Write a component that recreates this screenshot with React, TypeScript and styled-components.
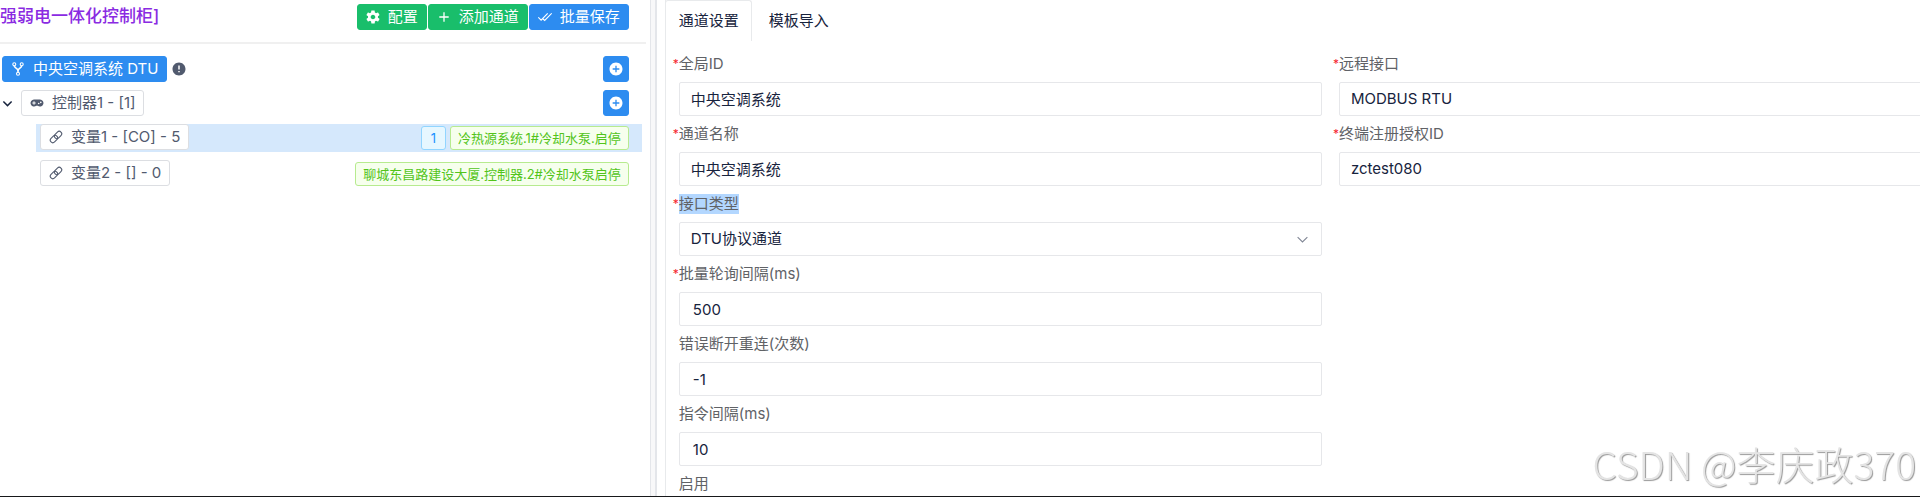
import React from 'react';
import styled, { createGlobalStyle, css } from 'styled-components';
import { IoMdSettings, IoMdAddCircle, IoMdAlert } from 'react-icons/io';

const sans = `Inter, "Noto Sans CJK SC", sans-serif`;

const Global = createGlobalStyle`
  *, *::before, *::after { box-sizing: border-box; }
  body { margin: 0; background: #fff; color: #17233d; font: 15px/20px ${sans}; }
  button, input, select { font: inherit; }
`;

const Shell = styled.div`
  display: flex;
  height: 100vh;
  overflow: hidden;
  border-bottom: 1px solid #17181a;
`;

const Sidebar = styled.aside`
  flex: 0 0 34%;
  min-width: 640px;
  padding-right: 7px;
`;

const Header = styled.header`
  display: flex;
  justify-content: space-between;
  padding: 4px 17px 12px 0;
  border-bottom: 2px solid #f0f0f0;
`;

const Title = styled.h1`
  margin: 0;
  font-size: 17px;
  line-height: 24px;
  font-weight: 500;
  color: #8a2be2;
`;

const Actions = styled.div`
  display: flex;
  gap: 1px;
`;

type Tone = 'primary' | 'success' | 'plain';

const tones = {
  primary: css`background: #2d8cf0; border-color: #2d8cf0; color: #fff;`,
  success: css`background: #19be6b; border-color: #19be6b; color: #fff;`,
  plain: css`background: #fff; border-color: #dcdee2; color: #515a6e;`,
};

const Button = styled.button<{ $tone: Tone; $square?: boolean }>`
  display: inline-flex;
  align-items: center;
  justify-content: center;
  gap: 8px;
  height: 26px;
  padding: 0 8px;
  border: 1px solid;
  border-radius: 3px;
  white-space: nowrap;
  cursor: pointer;
  ${p => tones[p.$tone]}
  ${p => p.$square && css`width: 26px; padding: 0;`}
  svg { flex: none; width: 14px; height: 14px; }
`;

const Tree = styled.ul`
  display: flex;
  flex-direction: column;
  gap: 8px;
  margin: 0;
  padding: 12px 4px 0 0;
  list-style: none;
`;

const Row = styled.li<{ $leaf?: boolean; $selected?: boolean }>`
  display: flex;
  align-items: center;
  gap: 4px;
  min-height: 26px;
  margin-left: ${p => (p.$leaf ? 36 : 0)}px;
  padding: 0 13px 0 ${p => (p.$leaf ? 4 : 2)}px;
  background: ${p => (p.$selected ? '#d5e8fc' : 'transparent')};
  ${p => p.$leaf && css`min-height: 28px; align-items: flex-start;`}
`;

const Alert = styled(IoMdAlert)`
  width: 14px;
  height: 14px;
  margin-left: 1px;
  color: #515a6e;
`;

const Toggle = styled.button`
  display: flex;
  width: 15px;
  padding: 0;
  border: 0;
  background: none;
  color: #17233d;
`;

const Spacer = styled.span`
  flex: 1;
`;

const Tag = styled.span<{ $blue?: boolean }>`
  min-width: 25px;
  height: 24px;
  margin-top: 2px;
  padding: 0 7px;
  border: 1px solid ${p => (p.$blue ? '#91d5ff' : '#b7eb8f')};
  border-radius: 3px;
  background: ${p => (p.$blue ? '#e6f7ff' : '#f6ffed')};
  color: ${p => (p.$blue ? '#1890ff' : '#52c41a')};
  font-size: 13px;
  line-height: 22px;
  text-align: center;
  white-space: nowrap;
`;

const Splitter = styled.div`
  flex: 0 0 7px;
  margin-left: -3px;
  border: solid #e4e6ea;
  border-width: 0 2px 0 1px;
  background: #f8f8f9;
`;

const Main = styled.main`
  flex: 1;
  min-width: 0;
  margin-left: 8px;
  border-left: 1px solid #e8eaec;
`;

const Tabs = styled.nav`
  display: flex;
  height: 41px;
  margin-left: -1px;
`;

const Tab = styled.button<{ $active?: boolean }>`
  padding: 0 12px 0 13px;
  border: 1px solid ${p => (p.$active ? '#e8eaec' : 'transparent')};
  border-bottom: 0;
  border-radius: 3px 3px 0 0;
  background: none;
  color: #17233d;
  & + & { margin-left: 3px; }
`;

const Form = styled.form`
  display: grid;
  grid-template-columns: 1fr 1fr;
  column-gap: 17px;
  align-items: start;
  margin: 5px -62px 0 0;
  padding-left: 13px;
`;

const Column = styled.div`
  display: flex;
  flex-direction: column;
`;

const Label = styled.label`
  display: flex;
  align-items: center;
  height: 36px;
  color: #606266;
`;

const Star = styled.span`
  width: 6px;
  margin-left: -6px;
  color: #f5222d;
  font-size: 12px;
`;

const Marked = styled.mark`
  background: #b3d7ff;
  color: inherit;
`;

const control = css`
  width: 100%;
  height: 34px;
  border: 1px solid #e6e7ea;
  border-radius: 2px;
  background: #fff;
  color: #17233d;
  outline: 0;
`;

const Input = styled.input<{ $numeric?: boolean }>`
  ${control}
  padding: ${p => (p.$numeric ? '0 13px' : '0 11px 2px')};
`;

const SelectBox = styled.div`
  display: grid;
  align-items: center;
  & > * { grid-area: 1 / 1; }
  svg { justify-self: end; margin-right: 13px; pointer-events: none; }
`;

const Select = styled.select`
  ${control}
  appearance: none;
  padding: 0 11px;
`;

const Watermark = styled.div`
  position: fixed;
  right: 4px;
  bottom: 6px;
  color: #e4e4e4;
  font: 300 39px/56px "Noto Sans CJK SC", sans-serif;
  text-shadow: 1px 1px 1px #999;
  pointer-events: none;
`;

const Chevron = ({ size, color, stroke = 1 }: { size: number; color: string; stroke?: number }) => (
  <svg width={size} height={size} viewBox="0 0 12 12" fill="none" stroke={color} strokeWidth={stroke} aria-hidden>
    <path d="M1.5 3.8 6 8.3l4.5-4.5" />
  </svg>
);

const Plus = () => (
  <svg viewBox="0 0 14 14" fill="none" stroke="currentColor" strokeWidth="1.3" aria-hidden>
    <path d="M7 2.300v9.400M2.300 7h9.400" />
  </svg>
);

const DoubleCheck = () => (
  <svg viewBox="0 0 14 14" fill="none" stroke="currentColor" strokeWidth="1.2" aria-hidden>
    <path d="M.3 7.300 3.100 10.200 9.700 3.300M4.500 8.500 6.700 10.500 13.700 3.300" />
  </svg>
);

const Fork = () => (
  <svg viewBox="0 0 14 14" fill="none" stroke="currentColor" strokeWidth="1.1" aria-hidden>
    <circle cx="3.300" cy="2.300" r="1.500" />
    <circle cx="10.700" cy="2.300" r="1.500" />
    <circle cx="7" cy="11.800" r="1.500" />
    <path d="M3.300 3.800c0 2.600 3.700 2.200 3.700 5.200v1.300M10.700 3.800c0 2.600-3.700 2.200-3.700 5.200" strokeWidth="1.600" />
  </svg>
);

const Gamepad = () => (
  <svg viewBox="0 0 14 14" aria-hidden>
    <path
      d="M4 3.500h6a3.500 3.500 0 1 1-2.300 6.200H6.300A3.500 3.500 0 1 1 4 3.500z"
      fill="currentColor"
    />
    <path d="M4 5.300v3.400M2.300 7h3.400" stroke="#fff" strokeWidth="1" />
    <circle cx="8.700" cy="7.500" r=".8" fill="#fff" />
    <circle cx="10.800" cy="6.400" r=".8" fill="#fff" />
  </svg>
);

const Chain = () => (
  <svg viewBox="0 0 14 14" fill="none" stroke="currentColor" strokeWidth="1.1" aria-hidden>
    <g transform="rotate(-45 7 7)">
      <rect x="0" y="4.500" width="8.200" height="5" rx="2.500" />
      <rect x="5.800" y="4.500" width="8.200" height="5" rx="2.500" />
    </g>
  </svg>
);

const iconBox = '32 32 448 448';

interface FieldProps { id: string; label: string; value?: string; required?: boolean; numeric?: boolean }

const FieldLabel = ({ id, label, required, marked }: { id: string; label: string; required?: boolean; marked?: boolean }) => (
  <Label htmlFor={id}>
    {required && <Star>*</Star>}
    {marked ? <Marked>{label}</Marked> : label}
  </Label>
);

const Field = ({ id, label, value, required, numeric }: FieldProps) => (
  <div>
    <FieldLabel id={id} label={label} required={required} />
    <Input id={id} defaultValue={value} $numeric={numeric} />
  </div>
);

export default function App() {
  return (
    <>
      <Global />
      <Shell>
        <Sidebar>
          <Header>
            <Title>强弱电一体化控制柜]</Title>
            <Actions>
              <Button $tone="success"><IoMdSettings viewBox={iconBox} />配置</Button>
              <Button $tone="success"><Plus />添加通道</Button>
              <Button $tone="primary"><DoubleCheck />批量保存</Button>
            </Actions>
          </Header>
          <Tree>
            <Row>
              <Button $tone="primary"><Fork />中央空调系统 DTU</Button>
              <Alert viewBox={iconBox} />
              <Spacer />
              <Button $tone="primary" $square aria-label="添加"><IoMdAddCircle viewBox={iconBox} /></Button>
            </Row>
            <Row>
              <Toggle aria-label="折叠"><Chevron size={11} color="#17233d" stroke={1.6} /></Toggle>
              <Button $tone="plain"><Gamepad />控制器1 - [1]</Button>
              <Spacer />
              <Button $tone="primary" $square aria-label="添加"><IoMdAddCircle viewBox={iconBox} /></Button>
            </Row>
            <Row $leaf $selected>
              <Button $tone="plain"><Chain />变量1 - [CO] - 5</Button>
              <Spacer />
              <Tag $blue>1</Tag>
              <Tag>冷热源系统.1#冷却水泵.启停</Tag>
            </Row>
            <Row $leaf>
              <Button $tone="plain"><Chain />变量2 - [] - 0</Button>
              <Spacer />
              <Tag>聊城东昌路建设大厦.控制器.2#冷却水泵启停</Tag>
            </Row>
          </Tree>
        </Sidebar>
        <Splitter />
        <Main>
          <Tabs>
            <Tab $active>通道设置</Tab>
            <Tab>模板导入</Tab>
          </Tabs>
          <Form>
            <Column>
              <Field id="gid" label="全局ID" value="中央空调系统" required />
              <Field id="name" label="通道名称" value="中央空调系统" required />
              <div>
                <FieldLabel id="kind" label="接口类型" required marked />
                <SelectBox>
                  <Select id="kind"><option>DTU协议通道</option></Select>
                  <Chevron size={13} color="#808695" />
                </SelectBox>
              </div>
              <Field id="poll" label="批量轮询间隔(ms)" value="500" required numeric />
              <Field id="retry" label="错误断开重连(次数)" value="-1" numeric />
              <Field id="delay" label="指令间隔(ms)" value="10" numeric />
              <Label as="span">启用</Label>
            </Column>
            <Column>
              <Field id="remote" label="远程接口" value="MODBUS RTU" required />
              <Field id="auth" label="终端注册授权ID" value="zctest080" required />
            </Column>
          </Form>
        </Main>
      </Shell>
      <Watermark>CSDN @李庆政370</Watermark>
    </>
  );
}
